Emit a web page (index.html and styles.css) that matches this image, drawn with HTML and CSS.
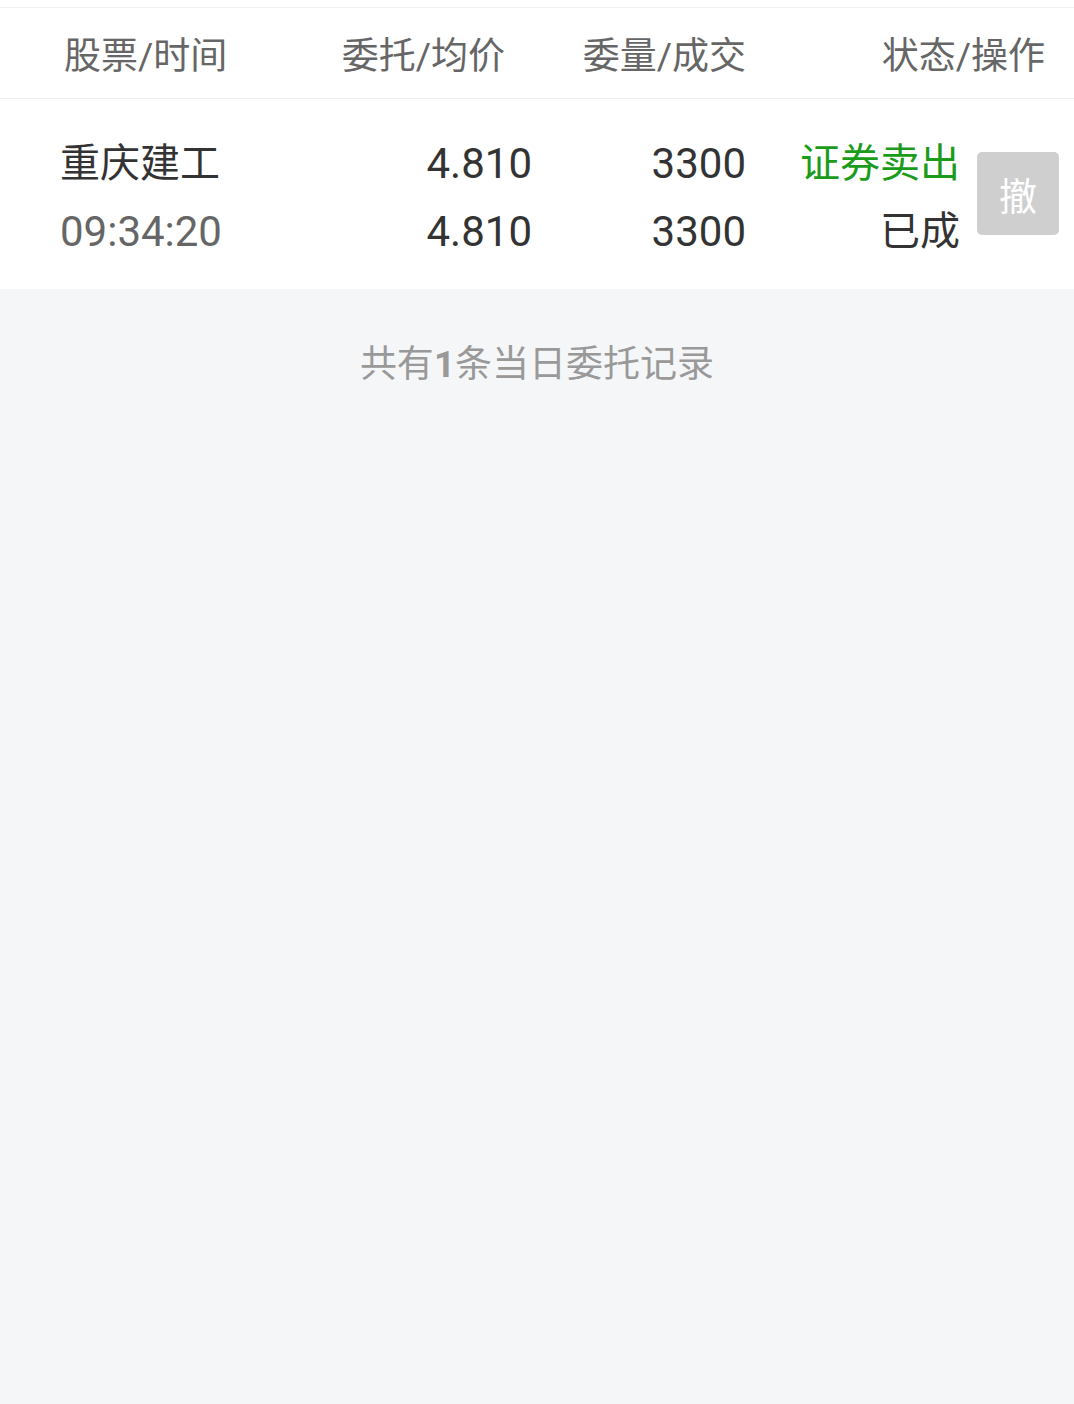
FILE: index.html
```html
<!DOCTYPE html>
<html>
<head>
  <meta charset="utf-8">
  <title>当日委托</title>
  <link rel="stylesheet" href="styles.css">
</head>
<body>
  <div class="panel">
    <div class="head">
      <div class="h-stock">股票/时间</div>
      <div class="h-price">委托/均价</div>
      <div class="h-qty">委量/成交</div>
      <div class="h-state">状态/操作</div>
    </div>

    <div class="order">
      <div class="c-stock">
        <div class="name">重庆建工</div>
        <div class="time num">09:34:20</div>
      </div>
      <div class="c-price num">
        <div>4.810</div>
        <div>4.810</div>
      </div>
      <div class="c-qty num">
        <div>3300</div>
        <div>3300</div>
      </div>
      <div class="c-state">
        <div class="sell">证券卖出</div>
        <div class="done">已成</div>
      </div>
      <button class="cancel" type="button">撤</button>
    </div>
  </div>

  <p class="summary">共有<b>1</b>条当日委托记录</p>
</body>
</html>
```

FILE: styles.css
```css
body {
  margin: 0;
  background: #f5f6f8;
  font-family: Roboto, "Noto Sans CJK SC", sans-serif;
  color: #333;
}
.panel {
  background: #fff;
  padding-top: 7px;
}
.head {
  display: flex;
  align-items: center;
  height: 90px;
  padding-left: 64px;
  border-top: 1px solid #f0f0f0;
  border-bottom: 1px solid #eee;
  font-size: 37px;
  color: #666;
}
.h-stock { width: 260px; }
.h-price { width: 181px; text-align: right; }
.h-qty { width: 241px; text-align: right; }
.h-state { width: 299px; text-align: right; }

.order {
  display: flex;
  align-items: center;
  padding: 31px 0 23px 60px;
  font-size: 40px;
  line-height: 68px;
}
.num { font-size: 42px; }
.c-stock { width: 280px; }
.c-price { width: 192px; text-align: right; }
.c-qty { width: 214px; text-align: right; }
.c-state { width: 214px; text-align: right; }
.time { color: #666; }
.sell { color: #1a9c1a; }
.done { color: #333; }
.cancel {
  width: 82px;
  height: 83px;
  margin: -10px 0 0 17px;
  padding: 0;
  border: none;
  border-radius: 5px;
  background: #cfcfcf;
  color: #fff;
  font-family: inherit;
  font-size: 38px;
}

.summary {
  margin: 0;
  padding-top: 45px;
  text-align: center;
  font-size: 37px;
  color: #999;
}
.summary b { font-weight: bold; }
```
